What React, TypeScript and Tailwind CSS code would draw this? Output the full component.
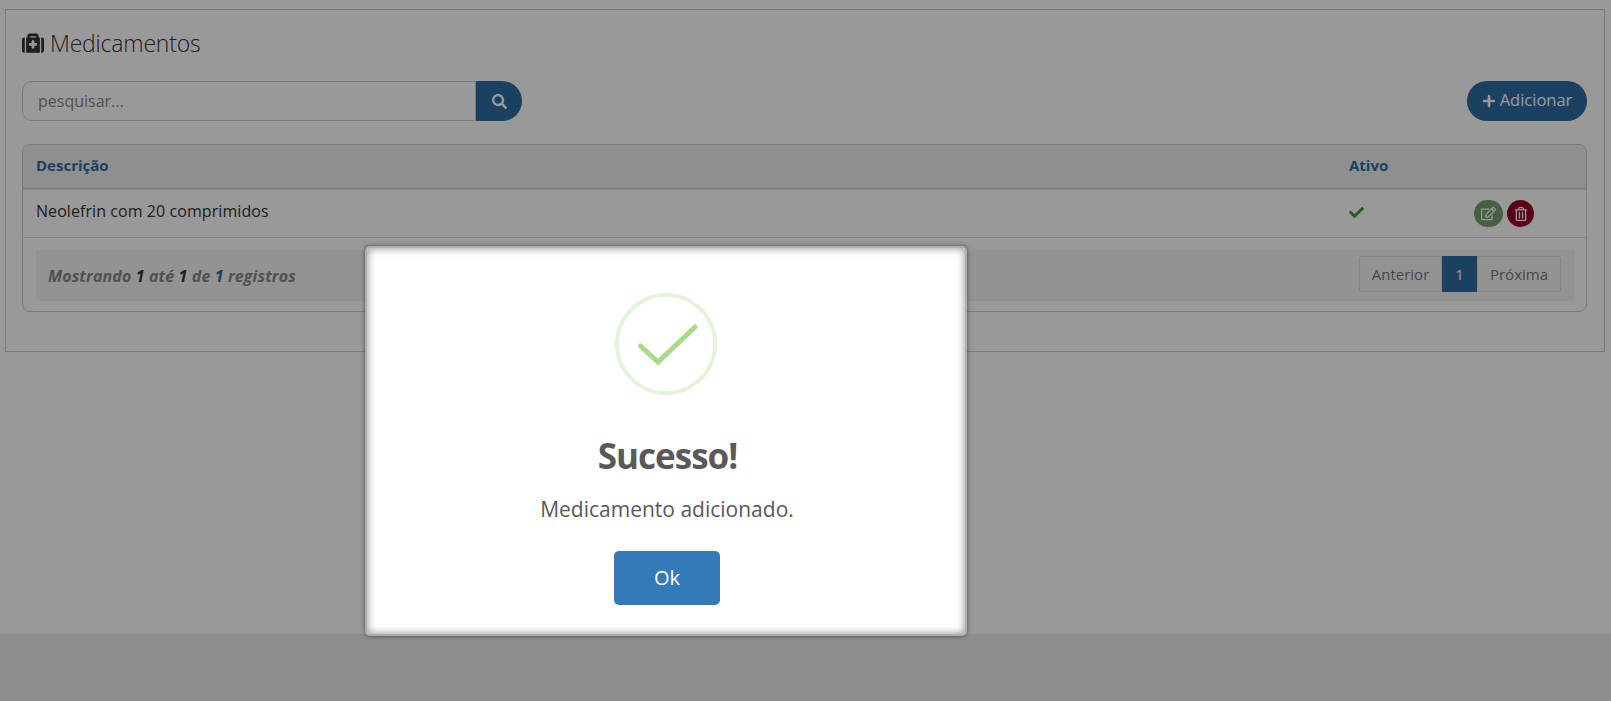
import { FaCheck, FaMedkit, FaPlus, FaRegEdit, FaRegTrashAlt, FaSearch } from "react-icons/fa";

export default function App() {
  return (
    <div className="relative flex h-[701px] flex-col overflow-hidden bg-white font-['Open_Sans',sans-serif] text-[#333]">
      <main className="h-[634px] pl-[5px] pr-[6px] pt-[9px]">
        <section className="h-[343px] border border-[#ccc] pl-4 pr-[17px] pt-[16px]">
          <h1 className="flex h-[34px] items-center gap-[6px] text-[23px] font-light tracking-[-0.2px] text-[#333]">
            <FaMedkit className="text-[22px]" />
            Medicamentos
          </h1>

          <div className="mt-[21px] flex items-center justify-between">
            <div className="flex h-10 w-[500px]">
              <input
                placeholder="pesquisar..."
                className="h-10 w-[454px] rounded-l-[10px] border border-[#ccc] px-[15px] text-[16px] placeholder:text-[#888]"
              />
              <button className="flex h-10 w-[46px] items-center justify-center rounded-r-[20px] bg-[#2e6da4] text-[15px] text-white">
                <FaSearch />
              </button>
            </div>
            <button className="flex h-10 w-[120px] items-center justify-center gap-1 rounded-[20px] border-b border-[#2e6da4] bg-[#2e6da4] text-[16.5px] text-white">
              <FaPlus className="text-[14px]" />
              Adicionar
            </button>
          </div>

          <div className="mt-[23px] h-[168px] rounded-[8px] border border-[#ccc]">
            <div className="flex h-[45px] items-center rounded-t-[8px] border-b-[3px] border-[#ddd] bg-[#eee] pb-[2px] pl-[13px] text-[15px] font-bold text-[#2e6da4]">
              <span className="w-[1313px]">Descrição</span>
              <span>Ativo</span>
            </div>
            <div className="flex h-[48px] items-start border-b border-[#ddd] pl-[13px] pt-[9px] text-[16px] leading-[24px] tracking-[0.07px]">
              <span className="w-[1313px]">Neolefrin com 20 comprimidos</span>
              <FaCheck className="mt-[6px] text-[15px] text-[#3c9a3c]" />
              <div className="ml-[110px] mt-[1px] flex gap-1">
                <button className="flex h-[27px] w-[29px] items-center justify-center rounded-full bg-[#78a06e] text-[15px] text-white">
                  <FaRegEdit />
                </button>
                <button className="flex size-[27px] items-center justify-center rounded-full bg-[#940028] text-[14px] text-white">
                  <FaRegTrashAlt />
                </button>
              </div>
            </div>
            <div className="ml-[13px] mr-[11px] mt-3 flex h-[51px] items-center justify-between bg-[#f5f5f5] pl-3 pr-[14px]">
              <p className="text-[16px] font-bold italic tracking-[0.12px] text-[#888]">
                Mostrando <span className="text-[#333]">1</span> até <span className="text-[#333]">1</span> de{" "}
                <span className="text-[#2e6da4]">1</span> registros
              </p>
              <div className="mb-[9px] flex h-9 self-end text-[15px] text-[#777]">
                <span className="flex w-[83px] items-center justify-center rounded-l-[3px] border border-[#ddd]">Anterior</span>
                <span className="flex w-[35px] items-center justify-center bg-[#2e6da4] text-white">1</span>
                <span className="flex w-[84px] items-center justify-center rounded-r-[3px] border border-[#ddd]">Próxima</span>
              </div>
            </div>
          </div>
        </section>
      </main>
      <footer className="flex-1 bg-[#ececec]" />

      <div className="absolute inset-0 bg-black/40">
        <div className="ml-[365px] mt-[246px] h-[390px] w-[602px] rounded-[5px] border-2 border-[#b5aca4] bg-white pt-[45px] text-center shadow-[inset_0_0_8px_#888,0_0_4px_rgba(0,0,0,0.5)]">
          <div className="mx-auto flex size-[102px] items-center justify-center rounded-full border-4 border-[#e4f3d9]">
            <svg className="ml-[3px] mt-[2px]" width="60" height="42" viewBox="0 0 60 42" fill="none" stroke="#a5dc86" strokeWidth="5" strokeLinecap="round">
              <path d="M2.5 22 L20 38 L57 3" />
            </svg>
          </div>
          <h2 className="mt-[35px] pl-[3px] text-[35px] font-bold tracking-[-1px] text-[#595959]">Sucesso!</h2>
          <p className="mt-[11px] pl-[2px] text-[21px] text-[#595959]">Medicamento adicionado.</p>
          <button className="ml-[2px] mt-[26px] h-[54px] w-[106px] rounded-[5px] bg-[#337ab7] text-[20px] text-white">Ok</button>
        </div>
      </div>
    </div>
  );
}
